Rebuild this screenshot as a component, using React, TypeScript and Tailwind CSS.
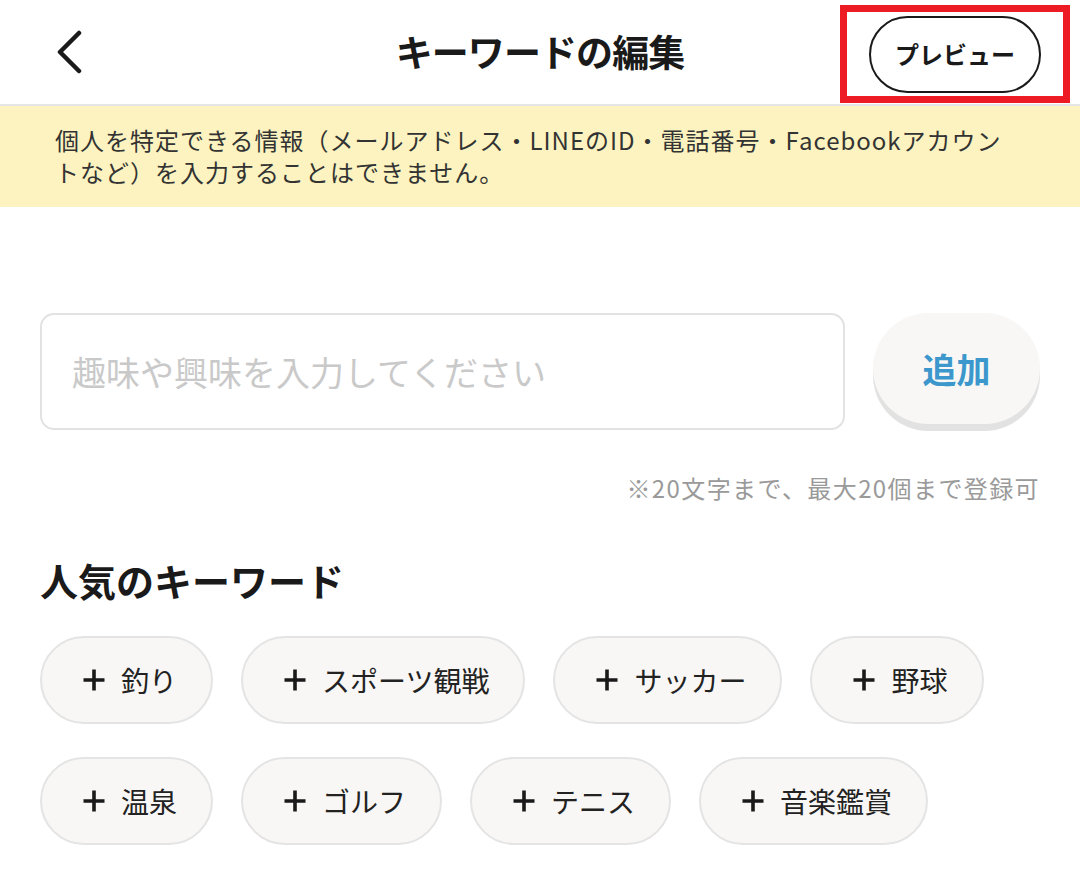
import { useState } from "react";

const keywords = [
  ["釣り", "スポーツ観戦", "サッカー", "野球"],
  ["温泉", "ゴルフ", "テニス", "音楽鑑賞"],
];

function PlusIcon() {
  return (
    <svg width="24" height="24" viewBox="0 0 24 24" fill="none">
      <path d="M12 1.5v21M1.5 12h21" stroke="#1a1a1a" strokeWidth="3.6" />
    </svg>
  );
}

function KeywordChip({ label }: { label: string }) {
  return (
    <button className="h-[88px] pl-[40px] pr-[34px] flex items-center gap-[15px] rounded-full border-2 border-[#e4e4e4] bg-[#f8f7f5] text-[28px] text-[#222]">
      <PlusIcon />
      <span>{label}</span>
    </button>
  );
}

export default function App() {
  const [value, setValue] = useState("");

  return (
    <div className="w-[1080px] min-h-[873px] bg-white font-['Noto_Sans_CJK_JP','Noto_Sans',sans-serif] text-[#1a1a1a]">
      <header className="h-[104px] grid grid-cols-[1fr_auto_1fr] items-center pl-[55px] pr-[10px] border-b-2 border-[#e6e6e6] box-content">
        <button className="w-[32px] h-[44px] flex items-center">
          <svg width="28" height="44" viewBox="0 0 28 44" fill="none">
            <path d="M24 3L5 22l19 19" stroke="#1a1a1a" strokeWidth="4.5" strokeLinecap="round" strokeLinejoin="round" />
          </svg>
        </button>
        <h1 className="pr-[45px] text-[37px] font-bold tracking-tight">キーワードの編集</h1>
        <div className="flex justify-end">
          <div className="w-[230px] h-[98px] mt-[4px] border-[7px] border-[#ed1c24] flex items-center justify-center">
            <button className="w-[172px] h-[77px] rounded-full border-[2.5px] border-[#1a1a1a] text-[24px] font-bold">
              プレビュー
            </button>
          </div>
        </div>
      </header>

      <div className="h-[101px] bg-[#fcf3c0] pl-[55px] pt-[18px] text-[24px] leading-[32px] text-[#333] tracking-[1px]">
        <p className="whitespace-nowrap">個人を特定できる情報（メールアドレス・LINEのID・電話番号・Facebookアカウン</p>
        <p className="whitespace-nowrap">トなど）を入力することはできません。</p>
      </div>

      <main className="px-[40px] pt-[106px]">
        <div className="flex gap-[28px]">
          <input
            value={value}
            onChange={(e) => setValue(e.target.value)}
            placeholder="趣味や興味を入力してください"
            className="flex-1 h-[117px] rounded-[14px] border-2 border-[#e2e2e2] px-[30px] text-[34px] outline-none placeholder:text-[#c9c9c9]"
          />
          <button className="w-[167px] h-[111px] rounded-[56px] bg-[#f8f7f5] shadow-[0_7px_0_#e2e2e2] text-[34px] font-bold text-[#3c97cc]">
            追加
          </button>
        </div>

        <p className="mt-[42px] text-right text-[24px] tracking-[1.4px] text-[#9a9a9a] leading-[32px]">
          ※20文字まで、最大20個まで登録可
        </p>

        <h2 className="mt-[52px] text-[38px] font-bold leading-[48px]">人気のキーワード</h2>

        <div className="mt-[32px] flex flex-col gap-[33px]">
          {keywords.map((row, i) => (
            <div key={i} className="flex gap-[28px]">
              {row.map((k) => (
                <KeywordChip key={k} label={k} />
              ))}
            </div>
          ))}
        </div>
      </main>
    </div>
  );
}
